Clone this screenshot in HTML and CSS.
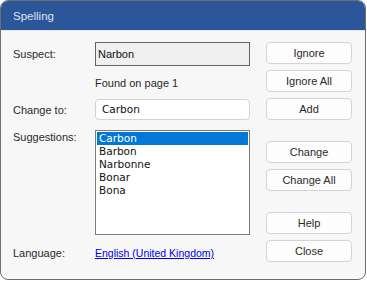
FILE: index.html
```html
<!DOCTYPE html>
<html lang="en">
<head>
    <meta charset="UTF-8">
    <meta name="viewport" content="width=device-width, initial-scale=1.0">
    <title>Spelling</title>
    <link rel="stylesheet" href="styles.css">
</head>
<body>
    <div class="dialog">
        <div class="titlebar">Spelling</div>
        <div class="content">
            <div class="fields">
                <div class="row row-suspect">
                    <span class="label">Suspect:</span>
                    <div class="suspect-box">Narbon</div>
                </div>
                <div class="row row-found">
                    <span class="label"></span>
                    <span class="found">Found on page 1</span>
                </div>
                <div class="row row-change">
                    <span class="label">Change to:</span>
                    <div class="change-box">Carbon</div>
                </div>
                <div class="row row-suggest">
                    <span class="label">Suggestions:</span>
                    <ul class="listbox">
                        <li class="selected">Carbon</li>
                        <li>Barbon</li>
                        <li>Narbonne</li>
                        <li>Bonar</li>
                        <li>Bona</li>
                    </ul>
                </div>
                <div class="row row-lang">
                    <span class="label">Language:</span>
                    <a class="lang-link" href="#">English (United Kingdom)</a>
                </div>
            </div>
            <div class="buttons">
                <button class="btn">Ignore</button>
                <button class="btn">Ignore All</button>
                <button class="btn">Add</button>
                <button class="btn btn-gap">Change</button>
                <button class="btn">Change All</button>
                <button class="btn btn-gap">Help</button>
                <button class="btn">Close</button>
            </div>
        </div>
    </div>
</body>
</html>
```

FILE: styles.css
```css
/* Page */
body {
    margin: 0;
    padding: 0;
    width: 367px;
    height: 281px;
    background: #ffffff;
    font-family: 'Liberation Sans', Arial, sans-serif;
    font-size: 11px;
    color: #2a2a2a;
    overflow: hidden;
}

/* Window frame */
.dialog {
    box-sizing: border-box;
    width: 366px;
    height: 280px;
    border: 1px solid #6e6e6e;
    border-radius: 8px;
    background: #f7f7f7;
    overflow: hidden;
}

.titlebar {
    height: 30px;
    background: #2b579a;
    color: #dfe4ee;
    font-size: 11.5px;
    line-height: 30px;
    padding-left: 12px;
    border-bottom: 1px solid #e6e6e6;
    box-sizing: border-box;
}

.content {
    display: flex;
    padding: 11px 0 0 12px;
}

/* Left side: labels and fields */
.fields {
    display: flex;
    flex-direction: column;
    width: 253px;
}

.row {
    display: flex;
    align-items: center;
}

.label {
    width: 82px;
    flex-shrink: 0;
}

.row-suspect {
    height: 24px;
}

.suspect-box {
    box-sizing: border-box;
    width: 155px;
    height: 24px;
    border: 1px solid #646464;
    background: #f0f0f0;
    padding-left: 2px;
    line-height: 22px;
    color: #111111;
}

.row-found {
    margin-top: 9px;
    height: 16px;
}

.row-change {
    margin-top: 8px;
}

.change-box {
    box-sizing: border-box;
    width: 155px;
    height: 21px;
    border: 1px solid #d3d3d3;
    border-radius: 4px;
    background: #ffffff;
    padding-left: 6px;
    line-height: 19px;
    font-family: 'DejaVu Sans', Verdana, sans-serif;
    font-size: 10.5px;
    color: #111111;
}

.row-suggest {
    margin-top: 10px;
    align-items: flex-start;
}

.row-suggest .label {
    line-height: 14px;
}

.listbox {
    box-sizing: border-box;
    width: 155px;
    height: 105px;
    margin: 0;
    padding: 1px;
    list-style: none;
    border: 1px solid #7a7a7a;
    background: #ffffff;
    font-family: 'DejaVu Sans', Verdana, sans-serif;
    font-size: 10.5px;
}

.listbox li {
    height: 13px;
    line-height: 13px;
    padding-left: 2px;
    color: #111111;
}

.listbox li.selected {
    background: #0078d7;
    color: #ffffff;
}

.row-lang {
    margin-top: 10px;
    height: 16px;
}

.lang-link {
    color: #0000ee;
    font-size: 10.5px;
    text-decoration: underline;
}

/* Right side: buttons */
.buttons {
    display: flex;
    flex-direction: column;
    gap: 6px;
}

.btn {
    box-sizing: border-box;
    width: 86px;
    height: 22px;
    padding: 0;
    border: 1px solid #d4d4d4;
    border-radius: 4px;
    background: #fdfdfd;
    font-family: 'Liberation Sans', Arial, sans-serif;
    font-size: 11px;
    color: #2a2a2a;
}

.btn-gap {
    margin-top: 15px;
}
```
